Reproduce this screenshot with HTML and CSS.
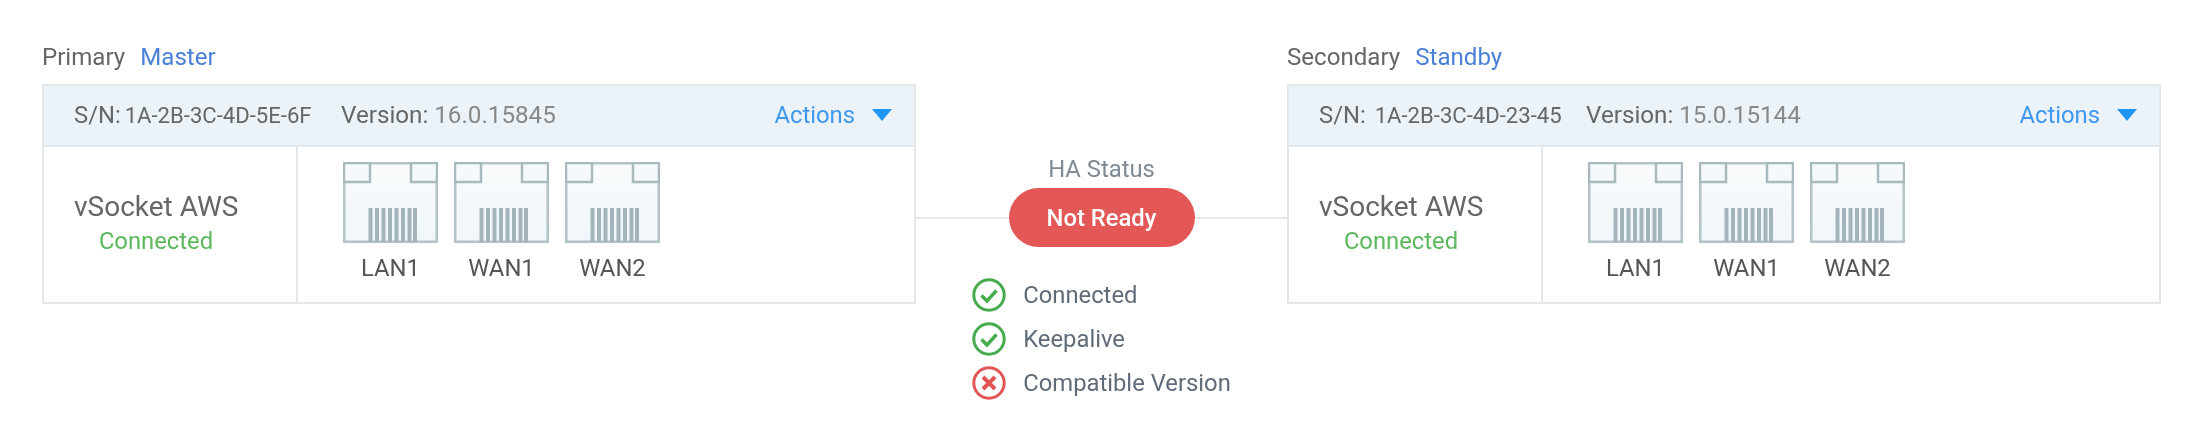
FILE: index.html
```html
<!DOCTYPE html>
<html lang="en">
<head>
<meta charset="utf-8">
<title>HA Status</title>
<link rel="stylesheet" href="styles.css">
</head>
<body>
<svg class="defs" width="0" height="0" aria-hidden="true">
  <defs>
    <linearGradient id="portfill" x1="0" y1="0" x2="0" y2="1">
      <stop offset="0" stop-color="#f9fbfc"/>
      <stop offset="1" stop-color="#f0f6fa"/>
    </linearGradient>
    <symbol id="port" viewBox="0 0 95 81">
      <rect x="1.25" y="1.25" width="92.5" height="78.5" fill="url(#portfill)" stroke="#b3c3c7" stroke-width="2.5"/>
      <path d="M1 1H27V20H1ZM68 1H94V20H68Z" fill="#f6f9fb" stroke="#a9babf" stroke-width="2.5"/>
      <path d="M27.500 46V80M34 46V80M40.500 46V80M47 46V80M53.500 46V80M60 46V80M66.500 46V80M72 46V80" stroke="#a3b5ba" stroke-width="4" fill="none"/>
    </symbol>
    <symbol id="ok" viewBox="0 0 34 34">
      <circle cx="17" cy="17" r="15.200" fill="none" stroke="#45ab4d" stroke-width="3"/>
      <path d="M9.500 17.500L15 23L24.500 12.500" fill="none" stroke="#45ab4d" stroke-width="3.400"/>
    </symbol>
    <symbol id="bad" viewBox="0 0 34 34">
      <circle cx="17" cy="17" r="15.200" fill="none" stroke="#e25555" stroke-width="3"/>
      <path d="M11 11L23 23M23 11L11 23" fill="none" stroke="#e25555" stroke-width="4"/>
    </symbol>
  </defs>
</svg>
<main class="ha">
  <section class="node">
    <div class="node-title"><span>Primary</span><span class="role">Master</span></div>
    <div class="card">
      <header class="card-head">
        <span class="sn">S/N:<span class="sn-value">1A-2B-3C-4D-5E-6F</span></span>
        <span class="version">Version: <span class="version-value">16.0.15845</span></span>
        <span class="actions">Actions<i class="caret"></i></span>
      </header>
      <div class="card-body">
        <div class="device">
          <div class="device-name">vSocket AWS</div>
          <div class="device-state">Connected</div>
        </div>
        <div class="ports">
          <div class="port"><svg class="port-icon"><use href="#port"/></svg><span>LAN1</span></div>
          <div class="port"><svg class="port-icon"><use href="#port"/></svg><span>WAN1</span></div>
          <div class="port"><svg class="port-icon"><use href="#port"/></svg><span>WAN2</span></div>
        </div>
      </div>
    </div>
  </section>

  <section class="status">
    <div class="status-title">HA Status</div>
    <div class="status-link">
      <span class="line"></span>
      <span class="pill">Not Ready</span>
      <span class="line"></span>
    </div>
    <ul class="checks">
      <li><svg class="check-icon"><use href="#ok"/></svg>Connected</li>
      <li><svg class="check-icon"><use href="#ok"/></svg>Keepalive</li>
      <li><svg class="check-icon"><use href="#bad"/></svg>Compatible Version</li>
    </ul>
  </section>

  <section class="node">
    <div class="node-title"><span>Secondary</span><span class="role">Standby</span></div>
    <div class="card">
      <header class="card-head">
        <span class="sn sn-wide">S/N:<span class="sn-value">1A-2B-3C-4D-23-45</span></span>
        <span class="version">Version: <span class="version-value">15.0.15144</span></span>
        <span class="actions">Actions<i class="caret"></i></span>
      </header>
      <div class="card-body">
        <div class="device">
          <div class="device-name">vSocket AWS</div>
          <div class="device-state">Connected</div>
        </div>
        <div class="ports">
          <div class="port"><svg class="port-icon"><use href="#port"/></svg><span>LAN1</span></div>
          <div class="port"><svg class="port-icon"><use href="#port"/></svg><span>WAN1</span></div>
          <div class="port"><svg class="port-icon"><use href="#port"/></svg><span>WAN2</span></div>
        </div>
      </div>
    </div>
  </section>
</main>
</body>
</html>
```

FILE: styles.css
```css
* { box-sizing: border-box; }

html, body {
  margin: 0;
  background: #fff;
}

body {
  font-family: Roboto, "Liberation Sans", sans-serif;
  color: #666;
  font-size: 23.8px;
}

.defs { position: absolute; }

.ha {
  display: flex;
  align-items: flex-start;
  padding: 43px 38px 0 42px;
  filter: blur(0.45px);
}

.node {
  flex: 0 0 874px;
}

.node-title {
  display: flex;
  gap: 15px;
  height: 41px;
  line-height: 28px;
  font-size: 24.1px;
}

.role { color: #4a80d8; }

.card {
  border: 2px solid #e3e7ea;
  height: 220px;
  display: flex;
  flex-direction: column;
}

.card-head {
  flex: 0 0 61px;
  display: flex;
  align-items: center;
  padding: 0 22px 2px 30px;
  background: #ebf3f9;
  border-bottom: 2px solid #e3e7ea;
}

.sn {
  width: 267px;
  flex: none;
  white-space: nowrap;
}

.sn-value {
  font-size: 22.1px;
  margin-left: 4px;
}

.sn-wide .sn-value { margin-left: 9px; }

.version {
  color: #666;
  font-size: 24.2px;
}

.version-value { color: #888; }

.actions {
  margin-left: auto;
  display: flex;
  align-items: center;
  color: #3f98f0;
}

.caret {
  width: 0;
  height: 0;
  margin-left: 17px;
  border-left: 10px solid transparent;
  border-right: 10px solid transparent;
  border-top: 12px solid #2196f3;
}

.card-body {
  flex: 1;
  display: flex;
}

.device {
  flex: 0 0 254px;
  border-right: 2px solid #e3e7ea;
  padding: 42px 0 0 30px;
  width: 254px;
}

.device-name {
  width: 166px;
  font-size: 28px;
  line-height: 36px;
  white-space: nowrap;
}

.device-state {
  width: 164px;
  text-align: center;
  color: #5cb85c;
  line-height: 32px;
}

.ports {
  display: flex;
  gap: 16px;
  padding: 15px 0 0 45px;
}

.port {
  width: 95px;
  display: flex;
  flex-direction: column;
  align-items: center;
  color: #555;
}

.port-icon {
  width: 95px;
  height: 81px;
  margin-bottom: 11px;
}

.status {
  flex: 0 0 371px;
  display: flex;
  flex-direction: column;
  align-items: stretch;
  padding-top: 108px;
}

.status-title {
  text-align: center;
  line-height: 36px;
  height: 37px;
  color: #7f8a94;
}

.status-link {
  display: flex;
  align-items: center;
}

.line {
  flex: 1;
  height: 2px;
  background: #e3e7ea;
}

.pill {
  flex: 0 0 186px;
  height: 59px;
  border-radius: 30px;
  background: #e45757;
  color: #fff;
  font-weight: 500;
  display: flex;
  align-items: center;
  justify-content: center;
}

.checks {
  list-style: none;
  margin: 31px 0 0;
  padding: 0;
  align-self: center;
  color: #5f6b78;
}

.checks li {
  display: flex;
  align-items: center;
  gap: 17px;
  height: 34px;
  margin-bottom: 10px;
  white-space: nowrap;
}

.check-icon {
  width: 34px;
  height: 34px;
  flex: none;
}
```
